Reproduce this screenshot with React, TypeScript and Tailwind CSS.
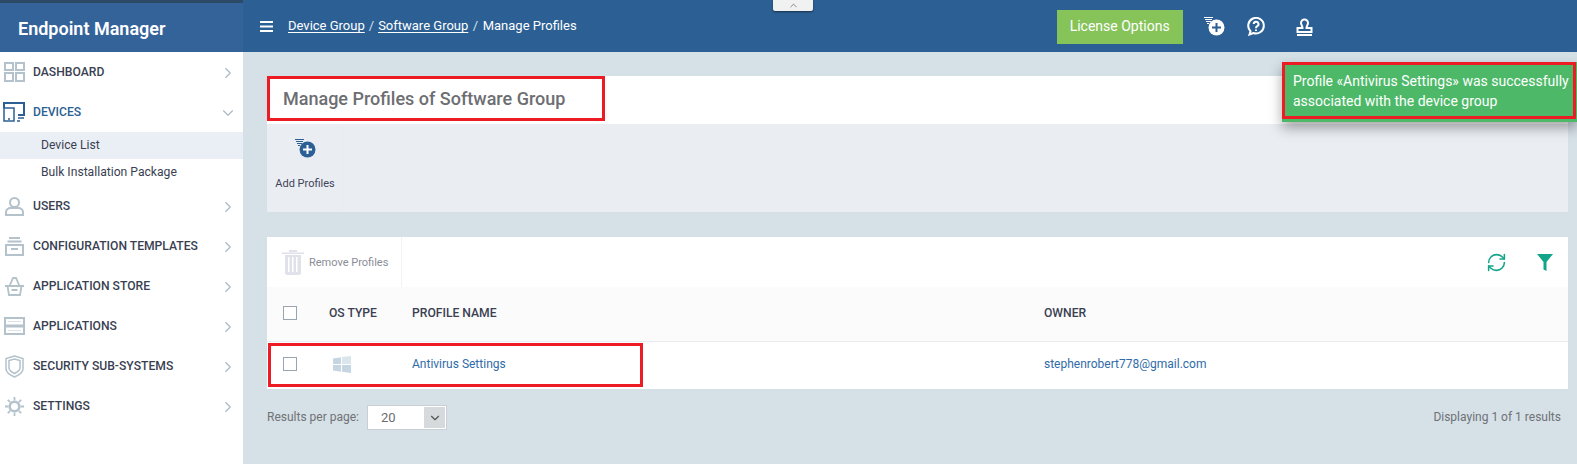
import { ChevronDown, ChevronRight, ChevronUp, RefreshCw } from "lucide-react";
import type { ReactNode } from "react";

function GridIcon() {
  return (
    <svg width="21" height="20" viewBox="0 0 21 20" fill="none" stroke="#b4c2cc" strokeWidth="2">
      <rect x="1" y="1" width="8" height="7" />
      <rect x="12" y="1" width="8" height="7" />
      <rect x="1" y="11" width="8" height="8" />
      <rect x="12" y="11" width="8" height="8" />
    </svg>
  );
}

function DevicesIcon() {
  return (
    <svg width="22" height="20" viewBox="0 0 22 20" fill="none" stroke="#2c5f94" strokeWidth="1.5">
      <path d="M1 6V1h20v12h-6" strokeWidth="2" />
      <rect x="1" y="6" width="10" height="13" />
      <path d="M15 16h6M5 17h2M14 19h3" />
    </svg>
  );
}

function UserIcon() {
  return (
    <svg width="19" height="19" viewBox="0 0 19 19" fill="none" stroke="#b4c2cc" strokeWidth="2">
      <circle cx="9.500" cy="5.500" r="4.500" />
      <path d="M1 18v-3c0-2.500 3-4 4-4h9c1 0 4 1.500 4 4v3z" />
    </svg>
  );
}

function TemplatesIcon() {
  return (
    <svg width="19" height="19" viewBox="0 0 19 19" fill="none" stroke="#b4c2cc" strokeWidth="2">
      <path d="M4 1h11M2.500 4.500h14" />
      <rect x="1" y="8" width="17" height="10" />
      <path d="M6 12h7" />
    </svg>
  );
}

function BasketIcon() {
  return (
    <svg width="19" height="19" viewBox="0 0 19 19" fill="none" stroke="#b4c2cc" strokeWidth="1.800">
      <path d="M0 9h19M2.500 9l1.500 9h11l1.500-9M4.500 9l3.500-8h3l3.500 8M6.500 13h6" />
    </svg>
  );
}

function ServersIcon() {
  return (
    <svg width="21" height="18" viewBox="0 0 21 18" fill="none" stroke="#b4c2cc" strokeWidth="2">
      <rect x="1" y="1" width="19" height="16" />
      <path d="M1 9h19" strokeWidth="3" />
      <path d="M4 4.500h13M4 13.500h13" strokeWidth="1" stroke="#dbe3e8" />
    </svg>
  );
}

function ShieldIcon() {
  return (
    <svg width="19" height="23" viewBox="0 0 19 23" fill="none" stroke="#b4c2cc" strokeWidth="1.500">
      <path d="M9.500 1L18 3.500V14c0 3-4 6-8.500 8C5 20 1 17 1 14V3.500z" />
      <path d="M9.500 4L15 5.500V13c0 2-2.500 4-5.500 5.500C6.500 17 4 15 4 13V5.500z" />
    </svg>
  );
}

function GearIcon() {
  return (
    <svg width="19" height="19" viewBox="0 0 19 19" fill="none" stroke="#b4c2cc" strokeWidth="2.500">
      <circle cx="9.500" cy="9.500" r="4.800" />
      <path d="M9.500 0v3.500M9.500 15.500V19M0 9.500h3.500M15.500 9.500H19M2.800 2.800l2.400 2.400M13.800 13.800l2.400 2.400M2.800 16.200l2.400-2.400M13.800 5.200l2.400-2.400" strokeWidth="1.800" />
    </svg>
  );
}

function AddListIcon({ color, cut }: { color: string; cut: string }) {
  return (
    <svg width="21" height="19" viewBox="0 0 21 19">
      <path d="M0 .5h9M1 2.500h7M2 4.500h5M3 6.500h2" stroke={color} strokeWidth="1" />
      <circle cx="12.500" cy="10.500" r="8" fill={color} />
      <path d="M12.500 6v9M8 10.500h9" stroke={cut} strokeWidth="2" />
    </svg>
  );
}

function HelpBubbleIcon() {
  return (
    <svg width="18" height="19" viewBox="0 0 18 19" fill="none" stroke="#fff" strokeWidth="2">
      <path d="M2.500 17.500l1-3.300A7.800 7.800 0 1 1 6.300 16z" />
      <path d="M6.700 7a2.400 2.400 0 1 1 3.500 2.200c-.9.500-1.200 1-1.200 2" />
      <path d="M9 12.500v1.500" />
    </svg>
  );
}

function StampIcon() {
  return (
    <svg width="17" height="18" viewBox="0 0 17 18" fill="none" stroke="#fff" strokeWidth="2">
      <path d="M5 5a3.500 3.500 0 1 1 7 0c0 2-1.500 2.500-1.500 5h5v4H1.500v-4h5C6.500 7.500 5 7 5 5z" />
      <path d="M1 17h15" />
    </svg>
  );
}

function HamburgerIcon() {
  return (
    <svg width="13" height="11" viewBox="0 0 13 11" fill="#fff">
      <path d="M0 0h13v2H0zM0 4.500h13v2H0zM0 9h13v2H0z" />
    </svg>
  );
}

function TrashIcon() {
  return (
    <svg width="22" height="25" viewBox="0 0 22 25" fill="#dfe2ea">
      <path d="M0 2.500h22v1.500H0zM7 0h8v2H7z" />
      <path d="M3 5h16v18a2 2 0 0 1-2 2H5a2 2 0 0 1-2-2zM6 7v15h1.500V7zm4 0v15h1.500V7zm4 0v15h1.500V7z" fillRule="evenodd" />
    </svg>
  );
}

function FilterIcon() {
  return (
    <svg width="16" height="17" viewBox="0 0 16 17" fill="#12a58a">
      <path d="M0 0h16L9.500 8v9L6.500 15.500V8z" />
    </svg>
  );
}

function WindowsIcon() {
  return (
    <svg width="18" height="17" viewBox="0 0 18 17">
      <path d="M0 2.500L8 1.200V8H0z" fill="#c5d6e2" />
      <path d="M9 1L18 0v8H9z" fill="#dbe5ec" />
      <path d="M0 9h8v6.800L0 14.500z" fill="#c5d6e2" />
      <path d="M9 9h9v8l-9-1.200z" fill="#c5d6e2" />
    </svg>
  );
}

function NavItem({ icon, label, active, open }: { icon: ReactNode; label: string; active?: boolean; open?: boolean }) {
  return (
    <div className="flex h-10 items-center">
      <div className="flex w-[33px] shrink-0 justify-center pr-[5px]">{icon}</div>
      <span className={`flex-1 text-[12.150px] font-medium ${active ? "text-[#2c5f94]" : "text-[#3a3f52]"}`}>{label}</span>
      {open ? (
        <ChevronDown size={18} strokeWidth={1.5} className="mr-[6px] mt-[2px] text-[#a9b8c4]" />
      ) : (
        <ChevronRight size={18} strokeWidth={1.5} className="mr-[6px] mt-[2px] text-[#a9b8c4]" />
      )}
    </div>
  );
}

function Sidebar() {
  return (
    <aside className="w-[243px] shrink-0 self-stretch bg-white">
      <div className="h-[52px] border-t-[3px] border-[#2c4a63] bg-[#34639a] pl-[18px] pt-[14px] text-[18px] font-semibold leading-[24px] text-white">
        Endpoint Manager
      </div>
      <nav>
        <NavItem icon={<GridIcon />} label="DASHBOARD" />
        <NavItem icon={<DevicesIcon />} label="DEVICES" active open />
        <div className="flex h-[27px] items-center bg-[#eaeff5] pb-[1px] pl-[41px] text-[12.150px] text-[#3a3f52]">Device List</div>
        <div className="flex h-[27px] items-center pb-[1px] pl-[41px] text-[12.150px] text-[#3a3f52]">Bulk Installation Package</div>
        <NavItem icon={<UserIcon />} label="USERS" />
        <NavItem icon={<TemplatesIcon />} label="CONFIGURATION TEMPLATES" />
        <NavItem icon={<BasketIcon />} label="APPLICATION STORE" />
        <NavItem icon={<ServersIcon />} label="APPLICATIONS" />
        <NavItem icon={<ShieldIcon />} label="SECURITY SUB-SYSTEMS" />
        <NavItem icon={<GearIcon />} label="SETTINGS" />
      </nav>
    </aside>
  );
}

function TopBar() {
  return (
    <header className="flex h-[52px] items-center bg-[#2c5f94] pl-[17px] text-white">
      <HamburgerIcon />
      <div className="ml-[15px] flex items-center text-[13px]">
        <span className="underline underline-offset-2">Device Group</span>
        <span className="mx-[4px] text-[#d5e0ea]">/</span>
        <span className="underline underline-offset-2">Software Group</span>
        <span className="mx-[4.500px] text-[#d5e0ea]">/</span>
        <span>Manage Profiles</span>
      </div>
      <div className="ml-[480px] mt-[1px] flex h-[34px] w-[126px] items-center justify-center bg-[#86c45a] text-[14px]">
        License Options
      </div>
      <div className="ml-[21px] mt-[1px]">
        <AddListIcon color="#ffffff" cut="#2c5f94" />
      </div>
      <div className="ml-[22px] mt-[1px]">
        <HelpBubbleIcon />
      </div>
      <div className="ml-[31px] mt-[1px]">
        <StampIcon />
      </div>
    </header>
  );
}

function ProfilesTable() {
  return (
    <section className="relative mt-[25px] bg-white">
      <div className="flex h-[50px] items-center justify-between">
        <div className="flex h-full items-center gap-[5px] border-r border-[#f2f3f5] pl-[15px] pr-[13px]">
          <TrashIcon />
          <span className="mt-[3px] text-[11px] text-[#8a8d96]">Remove Profiles</span>
        </div>
        <div className="flex items-center gap-[30px] pr-[15px]">
          <RefreshCw size={21} strokeWidth={1.75} className="text-[#12a58a]" />
          <FilterIcon />
        </div>
      </div>
      <div className="flex h-[55px] items-center border-b border-[#e9edf0] bg-[#fbfbfb] pb-[2px] text-[12.150px] font-medium text-[#3a3f52]">
        <div className="w-[62px] pl-[16px]">
          <div className="h-[14px] w-[14px] border border-[#9aa5b4] bg-white" />
        </div>
        <div className="w-[83px]">OS TYPE</div>
        <div className="w-[632px]">PROFILE NAME</div>
        <div>OWNER</div>
      </div>
      <div className="flex h-[47px] items-center pb-[3px] text-[12px] text-[#2f6ba8]">
        <div className="w-[62px] pl-[16px]">
          <div className="h-[14px] w-[14px] border border-[#9aa5b4] bg-white" />
        </div>
        <div className="w-[83px] pl-[4px]">
          <WindowsIcon />
        </div>
        <div className="w-[632px]">Antivirus Settings</div>
        <div>stephenrobert778@gmail.com</div>
      </div>
      {/* annotation round the row */}
      <div className="absolute left-[1px] top-[106px] h-[44px] w-[375px] border-[3px] border-[#ed1c24]" />
    </section>
  );
}

export default function App() {
  return (
    <div className="relative flex h-[464px] w-[1577px] overflow-hidden bg-[#d6e0e7] font-['Roboto',sans-serif]">
      <Sidebar />
      <main className="min-w-0 flex-1">
        <TopBar />
        <div className="pl-[24px] pr-[9px] pt-[24px]">
          <section className="relative">
            <div className="h-[48px] bg-white pl-[16px] pt-[11px] text-[18px] font-medium leading-[24px] text-[#6d6e72]">
              Manage Profiles of Software Group
            </div>
            <div className="h-[88px] bg-[#eaeef3]">
              <div className="flex h-full w-[77px] flex-col items-center border-r border-[#e8ecf1] pt-[15px] text-[11px] text-[#3f4458]">
                <AddListIcon color="#2c5f94" cut="#ffffff" />
                <span className="mt-[18px]">Add Profiles</span>
              </div>
            </div>
            {/* annotation round the title */}
            <div className="absolute left-0 top-0 h-[45px] w-[338px] border-[3px] border-[#ed1c24]" />
          </section>
          <ProfilesTable />
          <div className="mt-[16px] flex items-center justify-between pr-[7px] text-[12px] text-[#6f7276]">
            <div className="flex items-center gap-[8px]">
              <span className="mb-[2px]">Results per page:</span>
              <div className="flex h-[25px] w-[80px] items-center justify-between border border-[#c9cfd4] bg-white pl-[13px] pr-[1px] text-[13px] text-[#6a6d71]">
                20
                <div className="flex h-[21px] w-[21px] items-center justify-center bg-[#d6dadd]">
                  <ChevronDown size={14} strokeWidth={2} className="text-[#555]" />
                </div>
              </div>
            </div>
            <span className="mb-[2px]">Displaying 1 of 1 results</span>
          </div>
        </div>
      </main>
      {/* collapse handle */}
      <div className="absolute left-[773px] top-0 flex h-[11px] w-[40px] items-center justify-center rounded-b-[2px] bg-[#f1f1f1] shadow-[0_1px_2px_rgba(0,0,0,0.5)]">
        <ChevronUp size={11} strokeWidth={1.5} className="text-[#555]" />
      </div>
      {/* success toast */}
      <div className="absolute left-[1282px] top-[62px] h-[60px] w-[295px] bg-[#4db968] shadow-[0_6px_12px_rgba(0,0,0,0.35)]">
        <div className="h-[57px] w-[294px] border-[3px] border-[#ed1c24] pl-[8px] pt-[6px] text-[14px] leading-[20px] text-white">
          Profile «Antivirus Settings» was successfully
          <br />
          associated with the device group
        </div>
      </div>
    </div>
  );
}
